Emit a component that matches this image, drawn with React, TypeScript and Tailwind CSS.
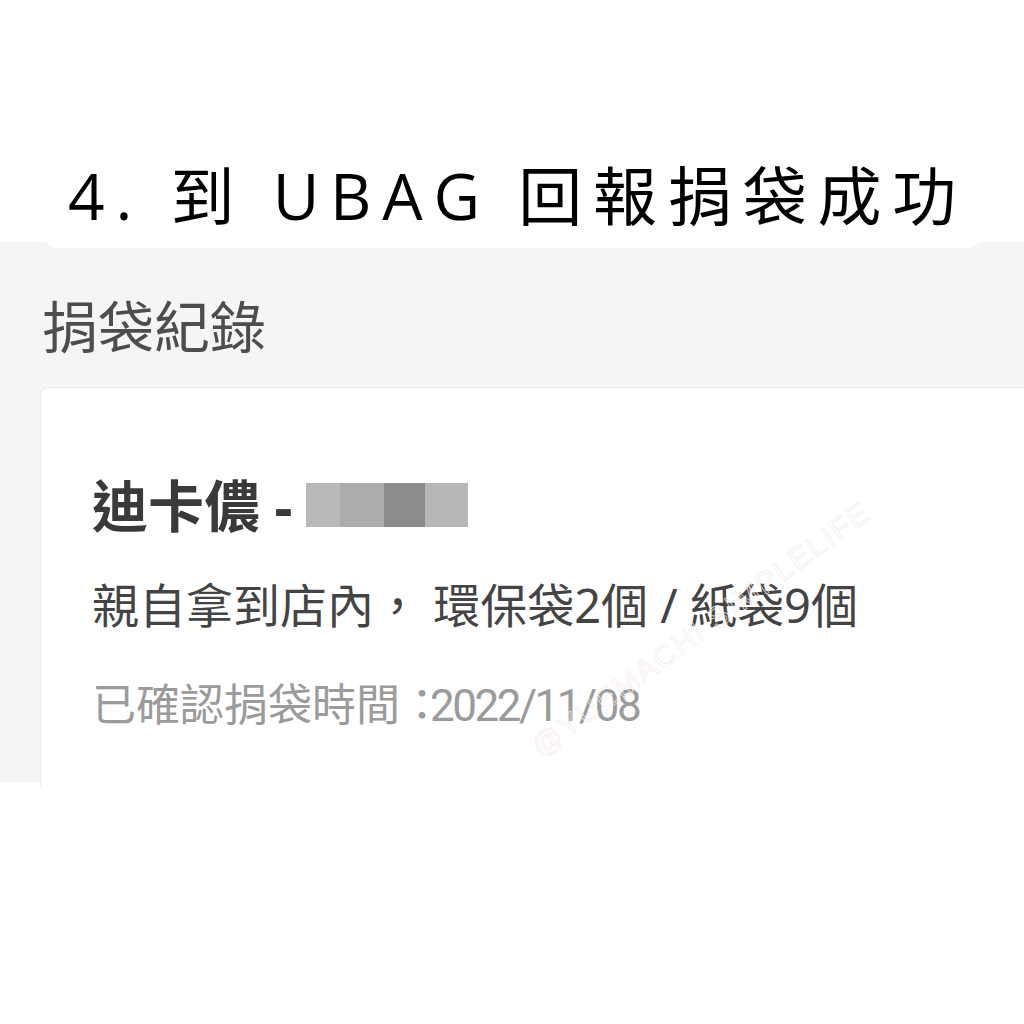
export default function App() {
  return (
    <div className="relative w-[1024px] h-[1024px] overflow-hidden bg-white">
      <div className="relative z-10 ml-[45px] mr-[44px] h-[248px] rounded-b-[12px] bg-white pl-[23px] pt-[150px]">
        <h1
          className="text-[64px] leading-[92px] tracking-[10.8px] text-black whitespace-nowrap"
          style={{ fontFamily: '"Open Sans", "Noto Sans CJK TC", sans-serif' }}
        >
          4. 到 UBAG 回報捐袋成功
        </h1>
      </div>
      <div
        className="-mt-[6px] h-[540px] bg-[#f5f5f5] pt-[44px]"
        style={{ fontFamily: '"Noto Sans", "Noto Sans CJK TC", sans-serif' }}
      >
        <h2 className="pl-[42px] text-[56px] leading-[80px] text-[#4d4d4d]">捐袋紀錄</h2>
        <div className="mt-[21px] ml-[40px] h-[399px] rounded-tl-[8px] border-l border-t border-[#ebebeb] bg-white pl-[51px] pt-[85px]">
          <div className="flex items-center h-[64px]">
            <span className="text-[56px] font-bold leading-[64px] text-[#3a3a3a]">迪卡儂 -</span>
            <div className="ml-[14px] flex h-[44px]">
              <div className="w-[34px] bg-[#b8b9bb]" />
              <div className="w-[44px] bg-[#acacac]" />
              <div className="w-[41px] bg-[#8d8c8a]" />
              <div className="w-[43px] bg-[#b8b7b5]" />
            </div>
          </div>
          <p className="mt-[38px] text-[47px] leading-[60px] text-[#444]">
            親自拿到店內， 環保袋2個 / 紙袋9個
          </p>
          <p className="mt-[40px] text-[44px] leading-[58px] text-[#9b9b9b]">
            已確認捐袋時間：
            <span className="-ml-[14px] tracking-[-2.5px]" style={{ fontFamily: 'Roboto, "Noto Sans", sans-serif' }}>
              2022/11/08
            </span>
          </p>
        </div>
      </div>
      <div
        className="absolute left-[535px] top-[732px] -rotate-[36deg] origin-left text-[30px] leading-[36px] tracking-[2px] text-transparent whitespace-nowrap"
        style={{ WebkitTextStroke: "0.7px #f5ebe8", fontFamily: '"Liberation Sans", sans-serif' }}
      >
        @YUEMACHI SIMPLELIFE
      </div>
    </div>
  );
}
